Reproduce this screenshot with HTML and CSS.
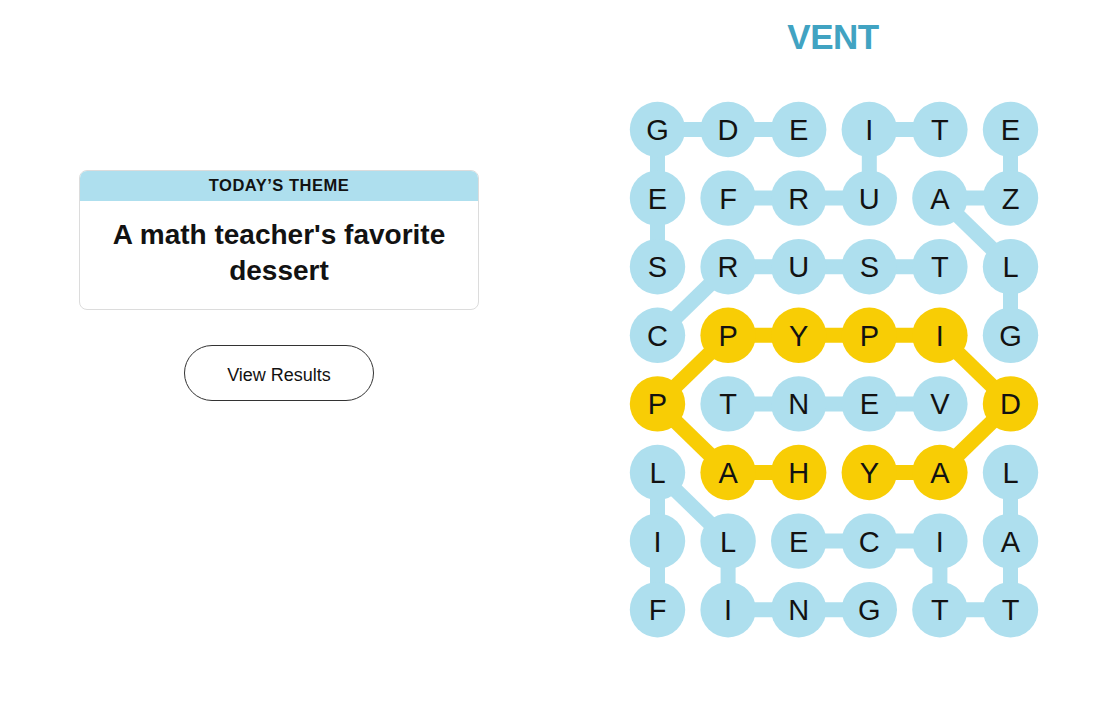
FILE: index.html
```html
<!DOCTYPE html>
<html lang="en">
<head>
<meta charset="utf-8">
<title>Strands</title>
<link rel="stylesheet" href="styles.css">
</head>
<body>
<main class="page">
  <section class="left">
    <div class="theme-card">
      <div class="theme-head">TODAY’S THEME</div>
      <div class="theme-body">A math teacher's favorite dessert</div>
    </div>
    <button class="results-btn" type="button">View Results</button>
  </section>
  <section class="right">
    <h1 class="current-word">VENT</h1>
    <svg class="board" width="410" height="538" viewBox="0 0 410 538" xmlns="http://www.w3.org/2000/svg">
      <g class="links blue">
        <line x1="28.5" y1="28.5" x2="99.1" y2="28.5"/>
        <line x1="99.1" y1="28.5" x2="169.7" y2="28.5"/>
        <line x1="240.3" y1="28.5" x2="310.9" y2="28.5"/>
        <line x1="28.5" y1="28.5" x2="28.5" y2="97.1"/>
        <line x1="240.3" y1="28.5" x2="240.3" y2="97.1"/>
        <line x1="381.5" y1="28.5" x2="381.5" y2="97.1"/>
        <line x1="99.1" y1="97.1" x2="169.7" y2="97.1"/>
        <line x1="169.7" y1="97.1" x2="240.3" y2="97.1"/>
        <line x1="310.9" y1="97.1" x2="381.5" y2="97.1"/>
        <line x1="28.5" y1="97.1" x2="28.5" y2="165.7"/>
        <line x1="310.9" y1="97.1" x2="381.5" y2="165.7"/>
        <line x1="99.1" y1="165.7" x2="169.7" y2="165.7"/>
        <line x1="169.7" y1="165.7" x2="240.3" y2="165.7"/>
        <line x1="240.3" y1="165.7" x2="310.9" y2="165.7"/>
        <line x1="99.1" y1="165.7" x2="28.5" y2="234.3"/>
        <line x1="381.5" y1="165.7" x2="381.5" y2="234.3"/>
        <line x1="99.1" y1="302.9" x2="169.7" y2="302.9"/>
        <line x1="169.7" y1="302.9" x2="240.3" y2="302.9"/>
        <line x1="240.3" y1="302.9" x2="310.9" y2="302.9"/>
        <line x1="28.5" y1="371.5" x2="28.5" y2="440.1"/>
        <line x1="28.5" y1="440.1" x2="28.5" y2="508.7"/>
        <line x1="28.5" y1="371.5" x2="99.1" y2="440.1"/>
        <line x1="99.1" y1="440.1" x2="99.1" y2="508.7"/>
        <line x1="99.1" y1="508.7" x2="169.7" y2="508.7"/>
        <line x1="169.7" y1="508.7" x2="240.3" y2="508.7"/>
        <line x1="169.7" y1="440.1" x2="240.3" y2="440.1"/>
        <line x1="240.3" y1="440.1" x2="310.9" y2="440.1"/>
        <line x1="310.9" y1="440.1" x2="310.9" y2="508.7"/>
        <line x1="310.9" y1="508.7" x2="381.5" y2="508.7"/>
        <line x1="381.5" y1="508.7" x2="381.5" y2="440.1"/>
        <line x1="381.5" y1="440.1" x2="381.5" y2="371.5"/>
      </g>
      <g class="links gold">
        <line x1="169.7" y1="371.5" x2="99.1" y2="371.5"/>
        <line x1="99.1" y1="371.5" x2="28.5" y2="302.9"/>
        <line x1="28.5" y1="302.9" x2="99.1" y2="234.3"/>
        <line x1="99.1" y1="234.3" x2="169.7" y2="234.3"/>
        <line x1="169.7" y1="234.3" x2="240.3" y2="234.3"/>
        <line x1="240.3" y1="234.3" x2="310.9" y2="234.3"/>
        <line x1="310.9" y1="234.3" x2="381.5" y2="302.9"/>
        <line x1="381.5" y1="302.9" x2="310.9" y2="371.5"/>
        <line x1="310.9" y1="371.5" x2="240.3" y2="371.5"/>
      </g>
      <g class="dots">
        <!-- row 0 -->
        <circle class="blue" cx="28.5" cy="28.5" r="27.7"/><text x="28.5" y="39">G</text>
        <circle class="blue" cx="99.1" cy="28.5" r="27.7"/><text x="99.1" y="39">D</text>
        <circle class="blue" cx="169.7" cy="28.5" r="27.7"/><text x="169.7" y="39">E</text>
        <circle class="blue" cx="240.3" cy="28.5" r="27.7"/><text x="240.3" y="39">I</text>
        <circle class="blue" cx="310.9" cy="28.5" r="27.7"/><text x="310.9" y="39">T</text>
        <circle class="blue" cx="381.5" cy="28.5" r="27.7"/><text x="381.5" y="39">E</text>
        <!-- row 1 -->
        <circle class="blue" cx="28.5" cy="97.1" r="27.7"/><text x="28.5" y="107.6">E</text>
        <circle class="blue" cx="99.1" cy="97.1" r="27.7"/><text x="99.1" y="107.6">F</text>
        <circle class="blue" cx="169.7" cy="97.1" r="27.7"/><text x="169.7" y="107.6">R</text>
        <circle class="blue" cx="240.3" cy="97.1" r="27.7"/><text x="240.3" y="107.6">U</text>
        <circle class="blue" cx="310.9" cy="97.1" r="27.7"/><text x="310.9" y="107.6">A</text>
        <circle class="blue" cx="381.5" cy="97.1" r="27.7"/><text x="381.5" y="107.6">Z</text>
        <!-- row 2 -->
        <circle class="blue" cx="28.5" cy="165.7" r="27.7"/><text x="28.5" y="176.2">S</text>
        <circle class="blue" cx="99.1" cy="165.7" r="27.7"/><text x="99.1" y="176.2">R</text>
        <circle class="blue" cx="169.7" cy="165.7" r="27.7"/><text x="169.7" y="176.2">U</text>
        <circle class="blue" cx="240.3" cy="165.7" r="27.7"/><text x="240.3" y="176.2">S</text>
        <circle class="blue" cx="310.9" cy="165.7" r="27.7"/><text x="310.9" y="176.2">T</text>
        <circle class="blue" cx="381.5" cy="165.7" r="27.7"/><text x="381.5" y="176.2">L</text>
        <!-- row 3 -->
        <circle class="blue" cx="28.5" cy="234.3" r="27.7"/><text x="28.5" y="244.8">C</text>
        <circle class="gold" cx="99.1" cy="234.3" r="27.7"/><text x="99.1" y="244.8">P</text>
        <circle class="gold" cx="169.7" cy="234.3" r="27.7"/><text x="169.7" y="244.8">Y</text>
        <circle class="gold" cx="240.3" cy="234.3" r="27.7"/><text x="240.3" y="244.8">P</text>
        <circle class="gold" cx="310.9" cy="234.3" r="27.7"/><text x="310.9" y="244.8">I</text>
        <circle class="blue" cx="381.5" cy="234.3" r="27.7"/><text x="381.5" y="244.8">G</text>
        <!-- row 4 -->
        <circle class="gold" cx="28.5" cy="302.9" r="27.7"/><text x="28.5" y="313.4">P</text>
        <circle class="blue" cx="99.1" cy="302.9" r="27.7"/><text x="99.1" y="313.4">T</text>
        <circle class="blue" cx="169.7" cy="302.9" r="27.7"/><text x="169.7" y="313.4">N</text>
        <circle class="blue" cx="240.3" cy="302.9" r="27.7"/><text x="240.3" y="313.4">E</text>
        <circle class="blue" cx="310.9" cy="302.9" r="27.7"/><text x="310.9" y="313.4">V</text>
        <circle class="gold" cx="381.5" cy="302.9" r="27.7"/><text x="381.5" y="313.4">D</text>
        <!-- row 5 -->
        <circle class="blue" cx="28.5" cy="371.5" r="27.7"/><text x="28.5" y="382">L</text>
        <circle class="gold" cx="99.1" cy="371.5" r="27.7"/><text x="99.1" y="382">A</text>
        <circle class="gold" cx="169.7" cy="371.5" r="27.7"/><text x="169.7" y="382">H</text>
        <circle class="gold" cx="240.3" cy="371.5" r="27.7"/><text x="240.3" y="382">Y</text>
        <circle class="gold" cx="310.9" cy="371.5" r="27.7"/><text x="310.9" y="382">A</text>
        <circle class="blue" cx="381.5" cy="371.5" r="27.7"/><text x="381.5" y="382">L</text>
        <!-- row 6 -->
        <circle class="blue" cx="28.5" cy="440.1" r="27.7"/><text x="28.5" y="450.6">I</text>
        <circle class="blue" cx="99.1" cy="440.1" r="27.7"/><text x="99.1" y="450.6">L</text>
        <circle class="blue" cx="169.7" cy="440.1" r="27.7"/><text x="169.7" y="450.6">E</text>
        <circle class="blue" cx="240.3" cy="440.1" r="27.7"/><text x="240.3" y="450.6">C</text>
        <circle class="blue" cx="310.9" cy="440.1" r="27.7"/><text x="310.9" y="450.6">I</text>
        <circle class="blue" cx="381.5" cy="440.1" r="27.7"/><text x="381.5" y="450.6">A</text>
        <!-- row 7 -->
        <circle class="blue" cx="28.5" cy="508.7" r="27.7"/><text x="28.5" y="519.2">F</text>
        <circle class="blue" cx="99.1" cy="508.7" r="27.7"/><text x="99.1" y="519.2">I</text>
        <circle class="blue" cx="169.7" cy="508.7" r="27.7"/><text x="169.7" y="519.2">N</text>
        <circle class="blue" cx="240.3" cy="508.7" r="27.7"/><text x="240.3" y="519.2">G</text>
        <circle class="blue" cx="310.9" cy="508.7" r="27.7"/><text x="310.9" y="519.2">T</text>
        <circle class="blue" cx="381.5" cy="508.7" r="27.7"/><text x="381.5" y="519.2">T</text>
      </g>
    </svg>
  </section>
</main>
</body>
</html>
```

FILE: styles.css
```css
* {
  box-sizing: border-box;
}

html, body {
  margin: 0;
  padding: 0;
  background: #ffffff;
}

body {
  font-family: "Liberation Sans", Arial, sans-serif;
  color: #121212;
}

.page {
  display: flex;
  width: 1119px;
  height: 726px;
}

.left {
  width: 558px;
  display: flex;
  flex-direction: column;
  align-items: center;
  padding-top: 170px;
}

.theme-card {
  width: 400px;
  border: 1px solid #dcdcdc;
  border-radius: 8px;
  overflow: hidden;
  text-align: center;
}

.theme-head {
  height: 30px;
  line-height: 29px;
  background: #aedfee;
  font-size: 16.5px;
  font-weight: 700;
  letter-spacing: 0.5px;
  color: #121212;
}

.theme-body {
  padding: 16px 20px 20px;
  font-size: 28px;
  line-height: 36px;
  font-weight: 700;
  color: #121212;
}

.results-btn {
  margin-top: 35px;
  width: 190px;
  height: 56px;
  border: 1px solid #333333;
  border-radius: 28px;
  background: #ffffff;
  font-family: "Liberation Sans", Arial, sans-serif;
  font-size: 18px;
  color: #121212;
  padding: 4px 0 0;
}

.right {
  width: 550px;
  display: flex;
  flex-direction: column;
  align-items: center;
}

.current-word {
  margin: 19px 0 0;
  height: 36px;
  font-size: 35px;
  line-height: 36px;
  font-weight: 700;
  letter-spacing: -0.5px;
  color: #41a3c2;
}

.board {
  display: block;
  margin-top: 46px;
  margin-left: 1px;
}

.links line {
  stroke-width: 15;
  stroke-linecap: butt;
}

.links.blue line {
  stroke: #aedfee;
}

.links.gold line {
  stroke: #f8cd05;
}

.dots circle.blue {
  fill: #aedfee;
}

.dots circle.gold {
  fill: #f8cd05;
}

.dots text {
  font-family: "Liberation Sans", Arial, sans-serif;
  font-size: 29px;
  fill: #121212;
  text-anchor: middle;
}
```
